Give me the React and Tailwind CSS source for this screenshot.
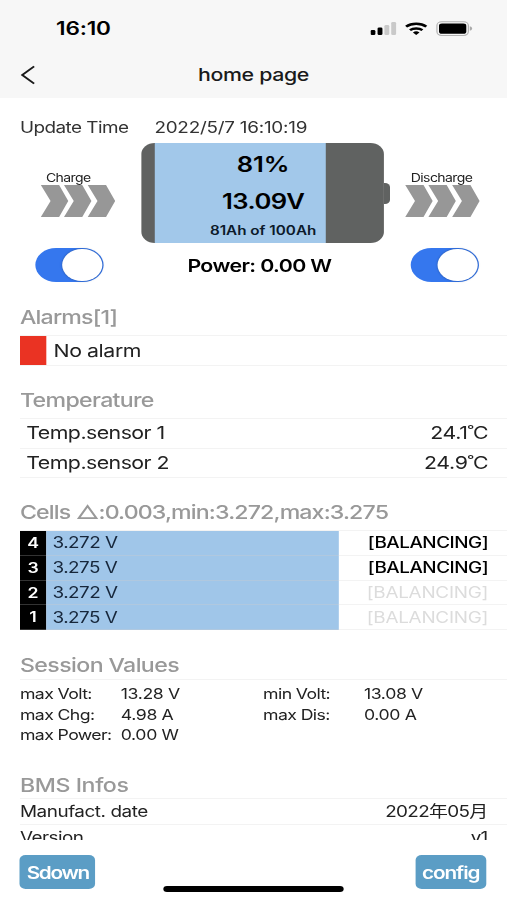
import React from "react";

const cells = [
  { id: 4, volt: "3.272 V", balancing: true },
  { id: 3, volt: "3.275 V", balancing: true },
  { id: 2, volt: "3.272 V", balancing: false },
  { id: 1, volt: "3.275 V", balancing: false },
];

function StatusBar() {
  return (
    <div className="flex h-[56px] items-center pl-[46px] pr-[28px] pt-[2px]">
      <div className="text-[18.5px] font-semibold tracking-[-0.15px]">16:10</div>
      <svg className="ml-auto" width="84" height="16" viewBox="0 0 84 16">
        <rect x="0" y="9" width="4" height="5" rx="1.2" />
        <rect x="5.8" y="6.5" width="4" height="7.5" rx="1.2" />
        <rect x="11.4" y="4" width="4" height="10" rx="1.2" fill="#c9c9c9" />
        <rect x="17" y="1" width="4" height="13" rx="1.2" fill="#c9c9c9" />
        <g fill="none" stroke="#000" strokeWidth="2.4">
          <path d="M29.2 5.6 A11.4 9.2 0 0 1 45.8 5.6" />
          <path d="M32.4 9.2 A7.2 6 0 0 1 42.6 9.2" />
        </g>
        <path d="M34.8 11.4 Q37.5 9 40.2 11.4 L37.5 14 Z" />
        <rect x="54.5" y="0.8" width="25.8" height="13.6" rx="3.8" fill="none" stroke="#b3b3b3" />
        <rect x="56.2" y="2.4" width="22.4" height="10.4" rx="2.4" />
        <path d="M81.5 5.2 Q83.4 5.8 83.4 7.5 Q83.4 9.2 81.5 9.8 Z" fill="#aaa" />
      </svg>
    </div>
  );
}

function Flow({ label, toggleClass }) {
  return (
    <div className="flex w-[72px] shrink-0 flex-col items-start">
      <div className="ml-[13.3px] mt-[28px] h-[14px] whitespace-nowrap text-[11.5px] leading-[14px] tracking-[-0.5px] text-[#222]">{label}</div>
      <svg className="ml-[8.6px]" width="62" height="32" viewBox="0 0 62 32" fill="#979797">
        <path d="M0.5 0 H15.5 L23 16 L15.5 32 H0.5 L8.5 16 Z" />
        <path d="M19.5 0 H34.5 L42 16 L34.5 32 H19.5 L27.5 16 Z" />
        <path d="M39 0 H54 L61.5 16 L54 32 H39 L47 16 Z" />
      </svg>
      <div className={`mt-[31px] flex h-[34px] w-[56px] items-center justify-end rounded-full bg-[#3577ee] px-px ${toggleClass}`}>
        <div className="h-[32px] w-[33px] rounded-full bg-white shadow-[0_0_2px_rgba(0,0,0,0.35)]" />
      </div>
    </div>
  );
}

function Battery() {
  return (
    <div className="flex flex-col items-center">
      <div className="flex items-center">
        <div className="flex h-[100px] w-[199px] overflow-hidden rounded-[11px] bg-[#606261] pl-[10.5px]">
          <div className="flex w-[140px] flex-col items-center bg-[#a2c8ea] pl-[38px]">
            <div className="mt-[8px] h-[28px] text-[21px] font-semibold leading-[28px]">81%</div>
            <div className="mt-[9px] h-[28px] text-[21px] font-semibold leading-[28px] tracking-[-0.4px]">13.09V</div>
            <div className="mt-[6px] h-[18px] whitespace-nowrap text-[12.5px] font-semibold leading-[18px] text-[#0c1a2a]">81Ah of 100Ah</div>
          </div>
        </div>
        <div className="h-[21px] w-[5px] rounded-r-[4px] bg-[#606261]" />
      </div>
      <div className="mr-[11px] mt-[11px] h-[24px] whitespace-nowrap text-[17.5px] font-semibold leading-[24px] tracking-[-0.5px]">Power: 0.00 W</div>
    </div>
  );
}

function Heading({ children, className = "" }) {
  return <h2 className={`flex h-[26px] items-center whitespace-nowrap text-[19px] font-medium text-[#999] ${className}`}>{children}</h2>;
}

function SessionRow({ items }) {
  return (
    <div className="flex h-[20.3px] items-center text-[14.5px] text-[#222]">
      {items.map(([k, v]) => (
        <div key={k} className="flex w-[199.5px] whitespace-nowrap">
          <div className="w-[82.7px] tracking-[-0.5px]">{k}</div>
          <div className="tracking-[-0.3px]">{v}</div>
        </div>
      ))}
    </div>
  );
}

export default function App() {
  return (
    <div className="h-[900px] w-[507px] overflow-hidden bg-white">
      <div
        className="flex h-[900px] w-[416px] origin-top-left scale-x-[1.21875] flex-col text-black"
        style={{ fontFamily: 'Inter, "Liberation Sans", "Noto Sans CJK SC", sans-serif' }}
      >
        <header className="h-[98px] shrink-0 bg-[#f7f7f7]">
          <StatusBar />
          <div className="relative flex h-[36px] items-center justify-center pt-[2px]">
            <svg className="absolute left-[17px] top-[9px]" width="13" height="20" viewBox="0 0 13 20" fill="none" stroke="#1a1a1a" strokeWidth="1.7">
              <path d="M11 1.4 L1.2 10 L11 18.6" />
            </svg>
            <h1 className="text-[17.5px] font-medium tracking-[-0.28px] text-[#1a1a1a]">home page</h1>
          </div>
        </header>

        <main className="h-[742px] shrink-0 overflow-hidden pl-[16.4px]">
          <div className="mt-[18px] flex h-[22px] items-center whitespace-nowrap pt-px text-[15.5px] text-[#333]">
            <div className="w-[110.3px] tracking-[-0.45px]">Update Time</div>
            <div className="tracking-[-0.2px]">2022/5/7 16:10:19</div>
          </div>

          <section className="mt-[5px] flex h-[139px] pl-[8px]">
            <Flow label="Charge" toggleClass="ml-[4.2px]" />
            <div className="ml-[20px] mr-[3.4px] w-[204px] shrink-0">
              <Battery />
            </div>
            <Flow label="Discharge" toggleClass="ml-[12.9px]" />
          </section>

          <Heading className="mt-[23px] tracking-[-0.67px]">Alarms[1]</Heading>
          <div className="mt-[4px] flex h-[31px] items-center border-y border-[#f3f3f3] text-[17.5px] text-[#222]">
            <div className="h-[29px] w-[21.5px] bg-[#ea3323]" />
            <div className="ml-[6px] pt-px tracking-[-0.35px]">No alarm</div>
          </div>

          <Heading className="mt-[22px] tracking-[-0.56px]">Temperature</Heading>
          <div className="mt-[4px] border-t border-[#f3f3f3] text-[17.5px] tracking-[-0.45px] text-[#222]">
            {[["Temp.sensor 1", "24.1"], ["Temp.sensor 2", "24.9"]].map(([k, v]) => (
              <div key={k} className="flex h-[29.5px] items-center justify-between border-b border-[#f3f3f3] pl-[5.2px] pr-[15.5px]">
                <div>{k}</div>
                <div className="tracking-[-0.3px]">{v}<span className="tracking-[-0.8px]">˚</span>C</div>
              </div>
            ))}
          </div>

          <Heading className="mt-[22px] tracking-[-0.71px]">Cells △:0.003,min:3.272,max:3.275</Heading>
          <div className="mt-[4px] border-t border-[#f3f3f3]">
            {cells.map((c) => (
              <div key={c.id} className="flex h-[24.8px] items-stretch text-[15.5px]">
                <div className="flex w-[21.5px] items-center justify-center border-b border-[#333] bg-black text-[14.5px] font-semibold text-white">{c.id}</div>
                <div className="flex w-[240px] items-center border-b border-[#b0c8df] bg-[#a0c6e9] pl-[5.2px] tracking-[-0.45px] text-[#16263a]">{c.volt}</div>
                <div className={`flex flex-1 items-center justify-end border-b border-[#f3f3f3] pr-[15.5px] ${c.balancing ? "font-medium tracking-[-0.4px] text-black" : "tracking-[-0.22px] text-[#dcdcdc]"}`}>
                  [BALANCING]
                </div>
              </div>
            ))}
          </div>

          <Heading className="mt-[23px] tracking-[-0.5px]">Session Values</Heading>
          <div className="border-t border-[#f3f3f3] pt-[4px]">
            <SessionRow items={[["max Volt:", "13.28 V"], ["min Volt:", "13.08 V"]]} />
            <SessionRow items={[["max Chg:", "4.98 A"], ["max Dis:", "0.00 A"]]} />
            <SessionRow items={[["max Power:", "0.00 W"]]} />
          </div>

          <Heading className="mt-[28px] tracking-[-0.35px]">BMS Infos</Heading>
          <div className="-mt-px border-t border-[#f3f3f3] text-[15.5px] text-[#222]">
            <div className="flex h-[25.5px] items-center justify-between border-b border-[#f3f3f3] pr-[16px]">
              <div className="tracking-[-0.38px]">Manufact. date</div>
              <div className="tracking-[-0.55px]">2022年05月</div>
            </div>
            <div className="flex h-[25.5px] items-center justify-between pr-[16px]">
              <div className="tracking-[-0.45px]">Version</div>
              <div className="tracking-[-0.6px]">v1</div>
            </div>
          </div>
        </main>

        <footer className="flex h-[60px] shrink-0 justify-between pl-[16.4px] pr-[17.2px] pt-[15px]">
          <button className="h-[34px] w-[62px] rounded-[5px] bg-[#5b9dc5] pt-[3px] text-[17px] font-semibold tracking-[-1.1px] text-white">Sdown</button>
          <div className="mr-[3px] mt-[31px] h-[5.5px] w-[148px] rounded-full bg-black" />
          <button className="h-[34px] w-[58px] rounded-[5px] bg-[#5b9dc5] pt-[3px] text-[17px] font-semibold tracking-[-0.9px] text-white">config</button>
        </footer>
      </div>
    </div>
  );
}
